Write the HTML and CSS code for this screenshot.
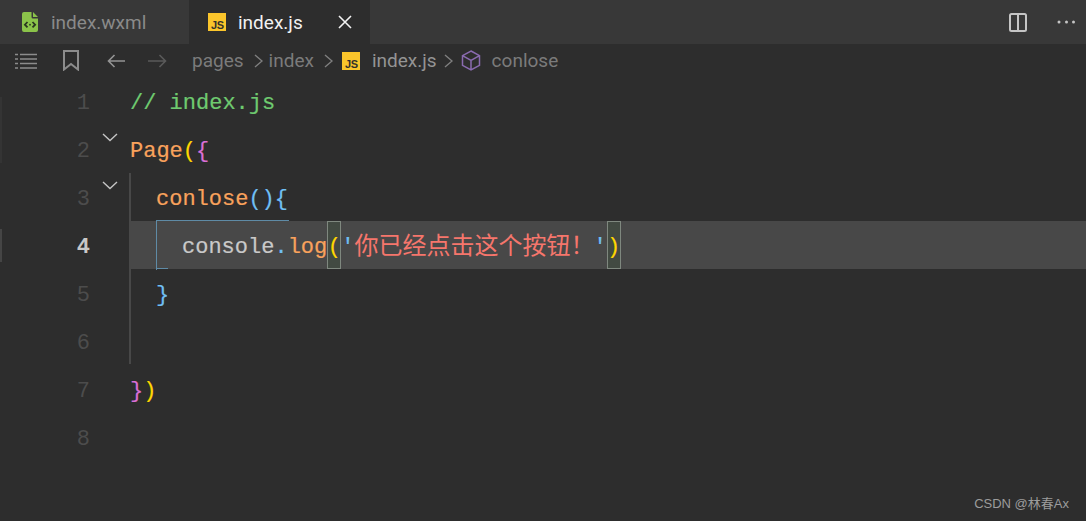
FILE: index.html
```html
<!DOCTYPE html>
<html lang="zh">
<head>
<meta charset="utf-8">
<title>index.js</title>
<link rel="stylesheet" href="styles.css">
</head>
<body>
<div class="app">
  <header class="tabbar">
    <div class="tab">
      <svg class="file-icon" width="16" height="20" viewBox="0 0 16 20"><path d="M2 0h7.500v5a1.500 1.500 0 0 0 1.500 1.500h5V18a2 2 0 0 1-2 2H2a2 2 0 0 1-2-2V2a2 2 0 0 1 2-2zM11 0l5 5h-5z" fill="#8bc34a"/><path d="M5.500 10l-2.600 2.700L5.500 15.400M10.500 10l2.600 2.700-2.600 2.700" fill="none" stroke="#2a3520" stroke-width="1.800"/><rect x="7.200" y="11.900" width="1.600" height="1.600" fill="#2a3520"/></svg>
      <span>index.wxml</span>
    </div>
    <div class="tab tab-active">
      <svg class="js-icon" width="18" height="18" viewBox="0 0 18 18"><rect width="18" height="18" fill="#fbc52b"/><text class="js-text" x="15.500" y="16" text-anchor="end">JS</text></svg>
      <span class="tab-name">index.js</span>
      <svg class="close" width="14" height="14" viewBox="0 0 14 14"><path d="M1 1l12 12M13 1L1 13" stroke="#f2f2f2" stroke-width="1.600" fill="none"/></svg>
    </div>
    <div class="tab-actions">
      <svg width="18" height="19" viewBox="0 0 18 19"><rect x="1" y="1" width="16" height="17" rx="1.500" fill="none" stroke="#c5c5c5" stroke-width="2"/><path d="M9 1v17" stroke="#c5c5c5" stroke-width="2"/></svg>
      <svg width="18" height="4" viewBox="0 0 18 4"><circle cx="2" cy="2" r="1.500" fill="#c5c5c5"/><circle cx="9.500" cy="2" r="1.500" fill="#c5c5c5"/><circle cx="16.500" cy="2" r="1.500" fill="#c5c5c5"/></svg>
    </div>
  </header>
  <nav class="crumbs">
    <svg class="tool" width="22" height="16" viewBox="0 0 22 16"><path d="M5 1.500h17M5 6h17M5 10.500h17M5 15h17M0 1.500h3M0 6h3M0 10.500h3M0 15h3" stroke="#8c8c8c" stroke-width="1.500" fill="none"/></svg>
    <svg class="tool tool-mark" width="16" height="21" viewBox="0 0 16 21"><path d="M1 1h14v18.500l-7-5.500-7 5.500z" fill="none" stroke="#8c8c8c" stroke-width="2"/></svg>
    <svg class="tool tool-back" width="18" height="14" viewBox="0 0 18 14"><path d="M18 7H1.500M7.500 1L1.500 7l6 6" fill="none" stroke="#949494" stroke-width="1.600"/></svg>
    <svg class="tool tool-fwd" width="19" height="14" viewBox="0 0 19 14"><path d="M0 7h17.500M11.500 1l6 6-6 6" fill="none" stroke="#5a5a5a" stroke-width="1.600"/></svg>
    <div class="path">
      <span>pages</span>
      <svg class="sep" width="9" height="14" viewBox="0 0 9 14"><path d="M1 1l7 6-7 6" fill="none" stroke="#7f7f7f" stroke-width="1.400"/></svg>
      <span>index</span>
      <svg class="sep" width="9" height="14" viewBox="0 0 9 14"><path d="M1 1l7 6-7 6" fill="none" stroke="#7f7f7f" stroke-width="1.400"/></svg>
      <svg class="js-icon path-icon" width="18" height="18" viewBox="0 0 18 18"><rect width="18" height="18" fill="#fbc52b"/><text class="js-text" x="15.500" y="16" text-anchor="end">JS</text></svg>
      <span class="path-file">index.js</span>
      <svg class="sep sep-last" width="9" height="14" viewBox="0 0 9 14"><path d="M1 1l7 6-7 6" fill="none" stroke="#7f7f7f" stroke-width="1.400"/></svg>
      <svg class="cube" width="20" height="21" viewBox="0 0 20 21"><path d="M10 1l8.500 4.700v9.600L10 20l-8.500-4.700V5.700zM1.500 5.700L10 10.500l8.500-4.800M10 10.500V20" fill="none" stroke="#8a6bb0" stroke-width="1.500"/></svg>
      <span class="path-symbol">conlose</span>
    </div>
  </nav>
  <main class="editor">
    <div class="gutter">
      <div class="num-row"><span class="num">1</span></div>
      <div class="num-row"><span class="num">2</span><svg class="fold" width="16" height="9" viewBox="0 0 16 9"><path d="M1 1l7 6.500L15 1" fill="none" stroke="#c5c5c5" stroke-width="1.400"/></svg></div>
      <div class="num-row"><span class="num">3</span><svg class="fold" width="16" height="9" viewBox="0 0 16 9"><path d="M1 1l7 6.500L15 1" fill="none" stroke="#c5c5c5" stroke-width="1.400"/></svg></div>
      <div class="num-row"><span class="num num-active">4</span></div>
      <div class="num-row"><span class="num">5</span></div>
      <div class="num-row"><span class="num">6</span></div>
      <div class="num-row"><span class="num">7</span></div>
      <div class="num-row"><span class="num">8</span></div>
    </div>
    <div class="code">
      <div class="guide"></div>
      <div class="line"><span class="t-comment">// index.js</span></div>
      <div class="line"><span class="t-fn">Page</span><span class="t-yellow">(</span><span class="t-pink">{</span></div>
      <div class="line indent1"><span class="t-fn">conlose</span><span class="t-blue">(){</span></div>
      <div class="line line-current indent2">
        <div class="scope"></div>
        <span class="t-var">console</span><span class="t-blue">.</span><span class="t-fn">log</span><span class="match t-yellow">(</span><span class="t-blue">'</span><span class="t-str">你已经点击这个按钮！</span><span class="t-blue">'</span><span class="match t-yellow">)</span>
      </div>
      <div class="line indent1"><span class="t-blue">}</span></div>
      <div class="line"></div>
      <div class="line"><span class="t-pink">}</span><span class="t-yellow">)</span></div>
      <div class="line"></div>
    </div>
  </main>
  <div class="edge-mark edge-mark-a"></div>
  <div class="edge-mark edge-mark-b"></div>
  <div class="watermark">CSDN @林春Ax</div>
</div>
</body>
</html>
```
FILE: styles.css
```css
* { box-sizing: border-box; }
html, body { margin: 0; padding: 0; }
body { background: #2d2d2d; overflow: hidden; }
.app {
  position: relative;
  width: 1086px;
  height: 521px;
  background: #2d2d2d;
  font-family: Roboto, "Noto Sans", sans-serif;
  overflow: hidden;
}
.tabbar { display: flex; height: 44px; background: #383838; }
.tab {
  display: flex;
  align-items: center;
  width: 190px;
  padding-left: 22px;
  gap: 13px;
  font-size: 19px;
  color: #8a8a8a;
  border-right: 1px solid #2d2d2d;
}
.tab-active {
  width: 180px;
  padding-left: 18px;
  gap: 12px;
  background: #2d2d2d;
  color: #f2f2f2;
  border-right: 0;
}
.tab-name { width: 88px; }
.js-text { font: bold 11px "Liberation Sans", sans-serif; letter-spacing: -0.5px; fill: #33312a; }
.tab-actions {
  margin-left: auto;
  display: flex;
  align-items: center;
  gap: 30px;
  padding-right: 11px;
}
.crumbs {
  display: flex;
  align-items: center;
  height: 33px;
  padding-left: 15px;
  color: #7b7b7b;
  font-size: 19px;
}
.tool-mark { margin-left: 26px; }
.tool-back { margin-left: 28px; }
.tool-fwd { margin-left: 23px; }
.path { display: flex; align-items: center; margin-left: 25px; }
.sep { margin: 0 6px 0 10px; }
.sep-last { margin-left: 7px; }
.path-icon { margin-left: 3px; }
.path-file { color: #949494; margin-left: 12px; }
.cube { margin-left: 2px; }
.path-symbol { margin-left: 11px; }
.editor { display: flex; }
.gutter { width: 130px; flex: none; }
.num-row { position: relative; height: 48px; display: flex; }
.num {
  display: block;
  width: 90px;
  text-align: right;
  font: 22px/53px "Liberation Mono", monospace;
  color: #4c4c4c;
}
.num-active { color: #c8c8c8; font-weight: bold; }
.fold { margin: 8px 0 0 12px; }
.code {
  position: relative;
  flex: 1;
  font: 22px/53px "Liberation Mono", "Noto Sans CJK SC", monospace;
  -webkit-text-stroke: 0.2px;
}
.line { display: flex; height: 48px; white-space: pre; }
.indent1 { padding-left: 26px; }
.indent2 { padding-left: 52px; }
.line-current { position: relative; background: #484848; }
.guide {
  position: absolute;
  left: -1px;
  top: 96px;
  width: 2px;
  height: 191px;
  background: #484848;
}
.scope {
  position: absolute;
  left: 26px;
  top: -1px;
  width: 132px;
  height: 49px;
}
.scope::before {
  content: "";
  position: absolute;
  left: 0; top: 0;
  width: 132px;
  height: 49px;
  border-top: 1px solid #5f8ba6;
  border-left: 1px solid #5f8ba6;
}
.scope::after {
  content: "";
  position: absolute;
  left: 0; bottom: 0;
  width: 12px;
  height: 1px;
  background: #5f8ba6;
}
.match {
  display: block;
  width: 14px;
  height: 48px;
  text-align: center;
  background: #424a42;
  box-shadow: inset 0 0 0 1px #7f887f;
}
.t-comment { color: #6fca70; }
.t-fn { color: #f9a25c; }
.t-yellow { color: #ffd700; }
.t-pink { color: #da6fd6; }
.t-blue { color: #70bff4; }
.t-var { color: #c9c9c9; }
.t-str {
  color: #f6766c;
  font-size: 24px;
  line-height: 45px;
  margin-right: -1px;
  font-family: "Noto Sans CJK SC", sans-serif;
  -webkit-text-stroke: 0;
}
.edge-mark {
  position: absolute;
  left: 0;
  width: 2px;
}
.edge-mark-a { top: 97px; height: 66px; background: #343434; }
.edge-mark-b { top: 229px; height: 33px; background: #454545; }
.watermark {
  position: absolute;
  right: 17px;
  bottom: 9px;
  font-family: "Liberation Sans", "Noto Sans CJK SC", sans-serif;
  font-size: 13px;
  color: #9c9c9c;
}
```
